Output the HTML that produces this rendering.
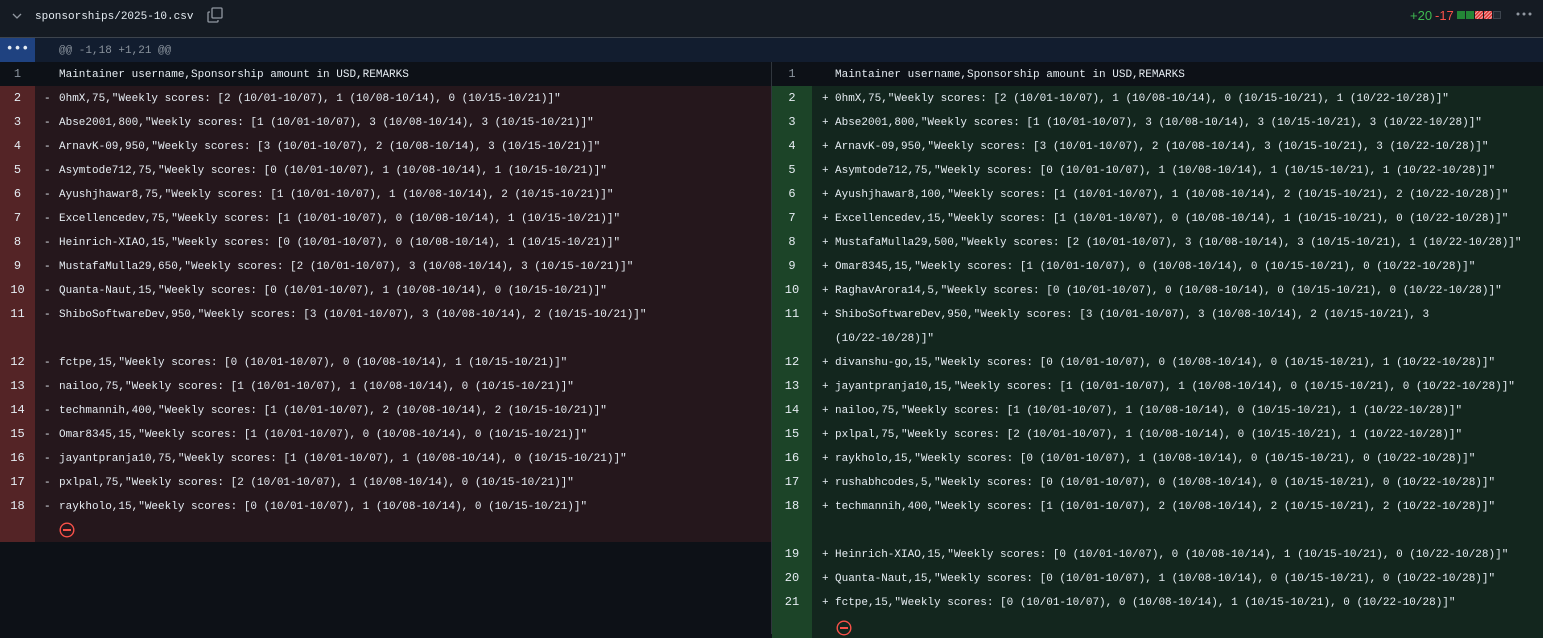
<!DOCTYPE html>
<html><head><meta charset="utf-8">
<style>
*{margin:0;padding:0;box-sizing:border-box}
body{width:1543px;height:634px;overflow:hidden;background:#0d1117;font-family:"Liberation Mono",monospace;font-size:11px;color:#e6edf3;position:relative}
.hdr{position:absolute;left:0;top:0;width:1543px;height:38px;background:#151b23;border-bottom:1px solid #3d444d}
.fn{position:absolute;left:35px;top:11px;font-size:11px;color:#e6edf3}
.hunk{position:absolute;left:0;top:38px;width:1543px;height:24px;background:#121d2f}
.hunk .dots{position:absolute;left:0;top:0;width:35px;height:24px;background:#1f4280;color:#e6edf3;text-align:center;line-height:22px;font-size:13px;font-weight:bold}
.hunk .t{position:absolute;left:59px;top:1px;line-height:24px;color:#8b949e}
.pane{position:absolute;top:62px}
.row{position:relative;height:24px;white-space:pre;line-height:24px}
.row .n{position:absolute;left:0;top:0;bottom:0;text-align:center;font-size:12px;line-height:25px}
.row .m{position:absolute;top:1px}
.row .c{position:absolute;top:1px}
#L{left:0;width:771px}
#L .n{width:35px}
#L .m{left:44px}
#L .c{left:59px}
#R{left:772px;width:771px}
#R .n{width:40px}
#R .m{left:50px}
#R .c{left:63px}
.ctx .n{color:#8b949e}
.del{background:#25171c}
.del .n{background:#542426}
.add{background:#13261e}
.add .n{background:#1c4428}
.h48{height:48px}
.div{position:absolute;left:771px;top:62px;width:1px;height:572px;background:#30363d}
</style></head><body>
<div class="hdr">
<svg style="position:absolute;left:11px;top:10px" width="12" height="12" viewBox="0 0 12 12"><path d="M2 4l4 4 4-4" fill="none" stroke="#9198a1" stroke-width="1.3"/></svg>
<div class="fn">sponsorships/2025-10.csv</div>
<svg style="position:absolute;left:207px;top:7px" width="16" height="16" viewBox="0 0 16 16" fill="none" stroke="#9198a1" stroke-width="1.3"><rect x="5" y="1" width="10" height="10" rx="1"/><path d="M3 5H2a1 1 0 0 0-1 1v8a1 1 0 0 0 1 1h8a1 1 0 0 0 1-1v-1"/></svg>
<div style="position:absolute;left:1410px;top:8px;font-family:'Liberation Sans',sans-serif;font-size:13px;color:#3fb950">+20</div>
<div style="position:absolute;left:1435px;top:8px;font-family:'Liberation Sans',sans-serif;font-size:13px;color:#f85149">-17</div>
<div style="position:absolute;left:1457px;top:11px;width:8px;height:8px;background:#238636"></div>
<div style="position:absolute;left:1466px;top:11px;width:8px;height:8px;background:#238636"></div>
<div style="position:absolute;left:1475px;top:11px;width:8px;height:8px;background:repeating-linear-gradient(135deg,#da3633 0 1.5px,#f0a0a0 1.5px 2.5px)"></div>
<div style="position:absolute;left:1484px;top:11px;width:8px;height:8px;background:repeating-linear-gradient(135deg,#da3633 0 1.5px,#f0a0a0 1.5px 2.5px)"></div>
<div style="position:absolute;left:1493px;top:11px;width:8px;height:8px;background:#212830;border:1px solid #3d444d"></div>
<svg style="position:absolute;left:1516px;top:11px" width="16" height="6"><circle cx="2" cy="3" r="1.5" fill="#9198a1"/><circle cx="8" cy="3" r="1.5" fill="#9198a1"/><circle cx="14" cy="3" r="1.5" fill="#9198a1"/></svg>
</div>
<div class="hunk"><div class="dots">•••</div><div class="t">@@ -1,18 +1,21 @@</div></div>

<div class="pane" id="L">
<div class="row ctx"><span class="n">1</span><span class="c">Maintainer username,Sponsorship amount in USD,REMARKS</span></div>
<div class="row del"><span class="n">2</span><span class="m">-</span><span class="c">0hmX,75,"Weekly scores: [2 (10/01-10/07), 1 (10/08-10/14), 0 (10/15-10/21)]"</span></div>
<div class="row del"><span class="n">3</span><span class="m">-</span><span class="c">Abse2001,800,"Weekly scores: [1 (10/01-10/07), 3 (10/08-10/14), 3 (10/15-10/21)]"</span></div>
<div class="row del"><span class="n">4</span><span class="m">-</span><span class="c">ArnavK-09,950,"Weekly scores: [3 (10/01-10/07), 2 (10/08-10/14), 3 (10/15-10/21)]"</span></div>
<div class="row del"><span class="n">5</span><span class="m">-</span><span class="c">Asymtode712,75,"Weekly scores: [0 (10/01-10/07), 1 (10/08-10/14), 1 (10/15-10/21)]"</span></div>
<div class="row del"><span class="n">6</span><span class="m">-</span><span class="c">Ayushjhawar8,75,"Weekly scores: [1 (10/01-10/07), 1 (10/08-10/14), 2 (10/15-10/21)]"</span></div>
<div class="row del"><span class="n">7</span><span class="m">-</span><span class="c">Excellencedev,75,"Weekly scores: [1 (10/01-10/07), 0 (10/08-10/14), 1 (10/15-10/21)]"</span></div>
<div class="row del"><span class="n">8</span><span class="m">-</span><span class="c">Heinrich-XIAO,15,"Weekly scores: [0 (10/01-10/07), 0 (10/08-10/14), 1 (10/15-10/21)]"</span></div>
<div class="row del"><span class="n">9</span><span class="m">-</span><span class="c">MustafaMulla29,650,"Weekly scores: [2 (10/01-10/07), 3 (10/08-10/14), 3 (10/15-10/21)]"</span></div>
<div class="row del"><span class="n">10</span><span class="m">-</span><span class="c">Quanta-Naut,15,"Weekly scores: [0 (10/01-10/07), 1 (10/08-10/14), 0 (10/15-10/21)]"</span></div>
<div class="row del h48"><span class="n" style="bottom:24px">11</span><span class="m">-</span><span class="c">ShiboSoftwareDev,950,"Weekly scores: [3 (10/01-10/07), 3 (10/08-10/14), 2 (10/15-10/21)]"</span><span class="n" style="top:24px"></span></div>
<div class="row del"><span class="n">12</span><span class="m">-</span><span class="c">fctpe,15,"Weekly scores: [0 (10/01-10/07), 0 (10/08-10/14), 1 (10/15-10/21)]"</span></div>
<div class="row del"><span class="n">13</span><span class="m">-</span><span class="c">nailoo,75,"Weekly scores: [1 (10/01-10/07), 1 (10/08-10/14), 0 (10/15-10/21)]"</span></div>
<div class="row del"><span class="n">14</span><span class="m">-</span><span class="c">techmannih,400,"Weekly scores: [1 (10/01-10/07), 2 (10/08-10/14), 2 (10/15-10/21)]"</span></div>
<div class="row del"><span class="n">15</span><span class="m">-</span><span class="c">Omar8345,15,"Weekly scores: [1 (10/01-10/07), 0 (10/08-10/14), 0 (10/15-10/21)]"</span></div>
<div class="row del"><span class="n">16</span><span class="m">-</span><span class="c">jayantpranja10,75,"Weekly scores: [1 (10/01-10/07), 1 (10/08-10/14), 0 (10/15-10/21)]"</span></div>
<div class="row del"><span class="n">17</span><span class="m">-</span><span class="c">pxlpal,75,"Weekly scores: [2 (10/01-10/07), 1 (10/08-10/14), 0 (10/15-10/21)]"</span></div>
<div class="row del"><span class="n">18</span><span class="m">-</span><span class="c">raykholo,15,"Weekly scores: [0 (10/01-10/07), 1 (10/08-10/14), 0 (10/15-10/21)]"</span></div>
<div class="row del"><span class="n"></span><svg style="position:absolute;left:59px;top:4px" width="16" height="16" viewBox="0 0 16 16"><circle cx="8" cy="8" r="6.8" fill="none" stroke="#f85149" stroke-width="1.4"/><rect x="4" y="7" width="8" height="2" fill="#f85149"/></svg></div>
</div>

<div class="div"></div>

<div class="pane" id="R">
<div class="row ctx"><span class="n">1</span><span class="c">Maintainer username,Sponsorship amount in USD,REMARKS</span></div>
<div class="row add"><span class="n">2</span><span class="m">+</span><span class="c">0hmX,75,"Weekly scores: [2 (10/01-10/07), 1 (10/08-10/14), 0 (10/15-10/21), 1 (10/22-10/28)]"</span></div>
<div class="row add"><span class="n">3</span><span class="m">+</span><span class="c">Abse2001,800,"Weekly scores: [1 (10/01-10/07), 3 (10/08-10/14), 3 (10/15-10/21), 3 (10/22-10/28)]"</span></div>
<div class="row add"><span class="n">4</span><span class="m">+</span><span class="c">ArnavK-09,950,"Weekly scores: [3 (10/01-10/07), 2 (10/08-10/14), 3 (10/15-10/21), 3 (10/22-10/28)]"</span></div>
<div class="row add"><span class="n">5</span><span class="m">+</span><span class="c">Asymtode712,75,"Weekly scores: [0 (10/01-10/07), 1 (10/08-10/14), 1 (10/15-10/21), 1 (10/22-10/28)]"</span></div>
<div class="row add"><span class="n">6</span><span class="m">+</span><span class="c">Ayushjhawar8,100,"Weekly scores: [1 (10/01-10/07), 1 (10/08-10/14), 2 (10/15-10/21), 2 (10/22-10/28)]"</span></div>
<div class="row add"><span class="n">7</span><span class="m">+</span><span class="c">Excellencedev,15,"Weekly scores: [1 (10/01-10/07), 0 (10/08-10/14), 1 (10/15-10/21), 0 (10/22-10/28)]"</span></div>
<div class="row add"><span class="n">8</span><span class="m">+</span><span class="c">MustafaMulla29,500,"Weekly scores: [2 (10/01-10/07), 3 (10/08-10/14), 3 (10/15-10/21), 1 (10/22-10/28)]"</span></div>
<div class="row add"><span class="n">9</span><span class="m">+</span><span class="c">Omar8345,15,"Weekly scores: [1 (10/01-10/07), 0 (10/08-10/14), 0 (10/15-10/21), 0 (10/22-10/28)]"</span></div>
<div class="row add"><span class="n">10</span><span class="m">+</span><span class="c">RaghavArora14,5,"Weekly scores: [0 (10/01-10/07), 0 (10/08-10/14), 0 (10/15-10/21), 0 (10/22-10/28)]"</span></div>
<div class="row add h48"><span class="n" style="bottom:24px">11</span><span class="n" style="top:24px"></span><span class="m">+</span><span class="c">ShiboSoftwareDev,950,"Weekly scores: [3 (10/01-10/07), 3 (10/08-10/14), 2 (10/15-10/21), 3
(10/22-10/28)]"</span></div>
<div class="row add"><span class="n">12</span><span class="m">+</span><span class="c">divanshu-go,15,"Weekly scores: [0 (10/01-10/07), 0 (10/08-10/14), 0 (10/15-10/21), 1 (10/22-10/28)]"</span></div>
<div class="row add"><span class="n">13</span><span class="m">+</span><span class="c">jayantpranja10,15,"Weekly scores: [1 (10/01-10/07), 1 (10/08-10/14), 0 (10/15-10/21), 0 (10/22-10/28)]"</span></div>
<div class="row add"><span class="n">14</span><span class="m">+</span><span class="c">nailoo,75,"Weekly scores: [1 (10/01-10/07), 1 (10/08-10/14), 0 (10/15-10/21), 1 (10/22-10/28)]"</span></div>
<div class="row add"><span class="n">15</span><span class="m">+</span><span class="c">pxlpal,75,"Weekly scores: [2 (10/01-10/07), 1 (10/08-10/14), 0 (10/15-10/21), 1 (10/22-10/28)]"</span></div>
<div class="row add"><span class="n">16</span><span class="m">+</span><span class="c">raykholo,15,"Weekly scores: [0 (10/01-10/07), 1 (10/08-10/14), 0 (10/15-10/21), 0 (10/22-10/28)]"</span></div>
<div class="row add"><span class="n">17</span><span class="m">+</span><span class="c">rushabhcodes,5,"Weekly scores: [0 (10/01-10/07), 0 (10/08-10/14), 0 (10/15-10/21), 0 (10/22-10/28)]"</span></div>
<div class="row add"><span class="n">18</span><span class="m">+</span><span class="c">techmannih,400,"Weekly scores: [1 (10/01-10/07), 2 (10/08-10/14), 2 (10/15-10/21), 2 (10/22-10/28)]"</span></div>
<div class="row add"><span class="n"></span></div>
<div class="row add"><span class="n">19</span><span class="m">+</span><span class="c">Heinrich-XIAO,15,"Weekly scores: [0 (10/01-10/07), 0 (10/08-10/14), 1 (10/15-10/21), 0 (10/22-10/28)]"</span></div>
<div class="row add"><span class="n">20</span><span class="m">+</span><span class="c">Quanta-Naut,15,"Weekly scores: [0 (10/01-10/07), 1 (10/08-10/14), 0 (10/15-10/21), 0 (10/22-10/28)]"</span></div>
<div class="row add"><span class="n">21</span><span class="m">+</span><span class="c">fctpe,15,"Weekly scores: [0 (10/01-10/07), 0 (10/08-10/14), 1 (10/15-10/21), 0 (10/22-10/28)]"</span></div>
<div class="row add"><span class="n"></span><svg style="position:absolute;left:64px;top:6px" width="16" height="16" viewBox="0 0 16 16"><circle cx="8" cy="8" r="6.8" fill="none" stroke="#f85149" stroke-width="1.4"/><rect x="4" y="7" width="8" height="2" fill="#f85149"/></svg></div>
</div>
</body></html>
